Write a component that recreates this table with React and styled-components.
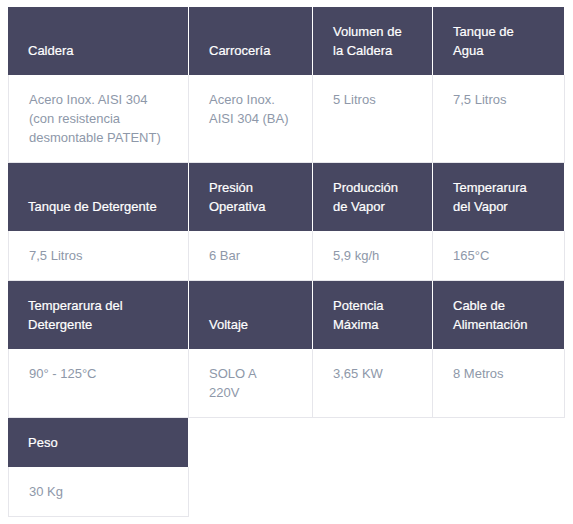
import React from "react";
import styled, { createGlobalStyle } from "styled-components";

const Global = createGlobalStyle`
  body {
    margin: 0;
    background: #fff;
    font-family: "Liberation Sans", Arial, sans-serif;
  }
`;

const Wrap = styled.div`
  padding: 7px 8px;
`;

const Grid = styled.div`
  display: grid;
  grid-template-columns: 181px 124px 120px 1fr;
  font-size: 13px;
  line-height: 19px;
`;

const Head = styled.div`
  display: flex;
  flex-direction: column;
  justify-content: flex-end;
  padding: 15px 22px 15px 20px;
  background: #474761;
  color: #fff;
  -webkit-text-stroke: 0.2px #fff;
  border-right: 1px solid #fff;
  grid-column: ${(p) => p.col};
`;

const Value = styled.div`
  padding: 15px 22px 15px 20px;
  color: #8e98a9;
  border-right: 1px solid #e6e6eb;
  border-bottom: 1px solid #e6e6eb;
  border-left: ${(p) => (p.col === 1 ? "1px solid #e6e6eb" : "none")};
  grid-column: ${(p) => p.col};
`;

const rows = [
  [
    ["Caldera", ["Acero Inox. AISI 304 (con resistencia desmontable PATENT)"]],
    ["Carrocería", ["Acero Inox. AISI 304 (BA)"]],
    ["Volumen de la Caldera", ["5 Litros"]],
    ["Tanque de Agua", ["7,5 Litros"]],
  ],
  [
    ["Tanque de Detergente", ["7,5 Litros"]],
    ["Presión Operativa", ["6 Bar"]],
    ["Producción de Vapor", ["5,9 kg/h"]],
    ["Temperarura del Vapor", ["165°C"]],
  ],
  [
    ["Temperarura del Detergente", ["90° - 125°C"]],
    ["Voltaje", ["SOLO A", "220V"]],
    ["Potencia Máxima", ["3,65 KW"]],
    ["Cable de Alimentación", ["8 Metros"]],
  ],
  [["Peso", ["30 Kg"]]],
];

export default function App() {
  return (
    <Wrap>
      <Global />
      <Grid>
        {rows.map((row, r) => (
          <React.Fragment key={r}>
            {row.map(([label], i) => (
              <Head key={"h" + i} col={i + 1}>
                {label}
              </Head>
            ))}
            {row.map(([, lines], i) => (
              <Value key={"v" + i} col={i + 1}>
                {lines.map((line, j) => (
                  <React.Fragment key={j}>
                    {j > 0 && <br />}
                    {line}
                  </React.Fragment>
                ))}
              </Value>
            ))}
          </React.Fragment>
        ))}
      </Grid>
    </Wrap>
  );
}
